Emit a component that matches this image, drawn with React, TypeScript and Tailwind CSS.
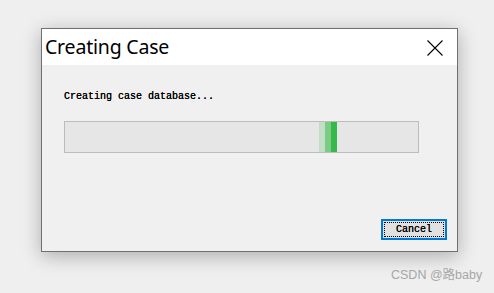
import React from "react";

export default function App() {
  return (
    <div className="relative w-[494px] h-[293px] bg-[#efefef] overflow-hidden" style={{ fontFamily: '"Liberation Sans", Arial, sans-serif' }}>
      <div className="pl-[41px] pt-[28px]">
        <div className="w-[417px] h-[224px] border border-[#707070] bg-[#f0f0f0] flex flex-col shadow-[0_4px_18px_rgba(0,0,0,0.28)]">
          <div className="h-[36px] bg-white flex items-center justify-between pl-[3px] pr-[14px]">
            <span className="text-[19.5px] text-black leading-none tracking-[-0.2px]" style={{ fontFamily: '"Noto Sans", "Open Sans", sans-serif' }}>Creating Case</span>
            <svg width="16" height="16" viewBox="0 0 16 16" className="mt-[1px]">
              <path d="M0.5 0.5 L15.5 15.5 M15.5 0.5 L0.5 15.5" stroke="#000" strokeWidth="1.1" fill="none" />
            </svg>
          </div>
          <div className="flex-1 flex flex-col pl-[22px] pr-[38px]">
            <div className="mt-[26px] text-[10px] leading-[12px] text-black [text-shadow:0_0_0.4px_#000]" style={{ fontFamily: '"Liberation Mono", "Courier New", monospace' }}>
              Creating case database...
            </div>
            <div className="mt-[18px] w-[355px] h-[32px] border border-[#bcbcbc] bg-[#e6e6e6] flex items-stretch">
              <div className="w-[254px]" />
              <div className="w-[6px] bg-[#c0dfc4]" />
              <div className="w-[6px] bg-[#7acb83]" />
              <div className="w-[6px] bg-[#36b94a]" />
            </div>
            <div className="flex-1" />
            <div className="flex justify-end -mr-[28px] mb-[11px]">
              <div className="w-[66px] h-[21px] border-2 border-[#0078d7] bg-[#e1e1e1] p-[1px]">
                <div className="w-full h-full border border-dotted border-black flex items-center justify-center text-[10px] text-black leading-none [text-shadow:0_0_0.4px_#000]" style={{ fontFamily: '"Liberation Mono", "Courier New", monospace' }}>
                  Cancel
                </div>
              </div>
            </div>
          </div>
        </div>
      </div>
      <div className="absolute left-[391px] top-[269px] text-[12.5px] text-[#a6a6a6] leading-none" style={{ fontFamily: '"Liberation Sans", Arial, "Noto Sans CJK SC", sans-serif' }}>
        CSDN @路baby
      </div>
    </div>
  );
}
